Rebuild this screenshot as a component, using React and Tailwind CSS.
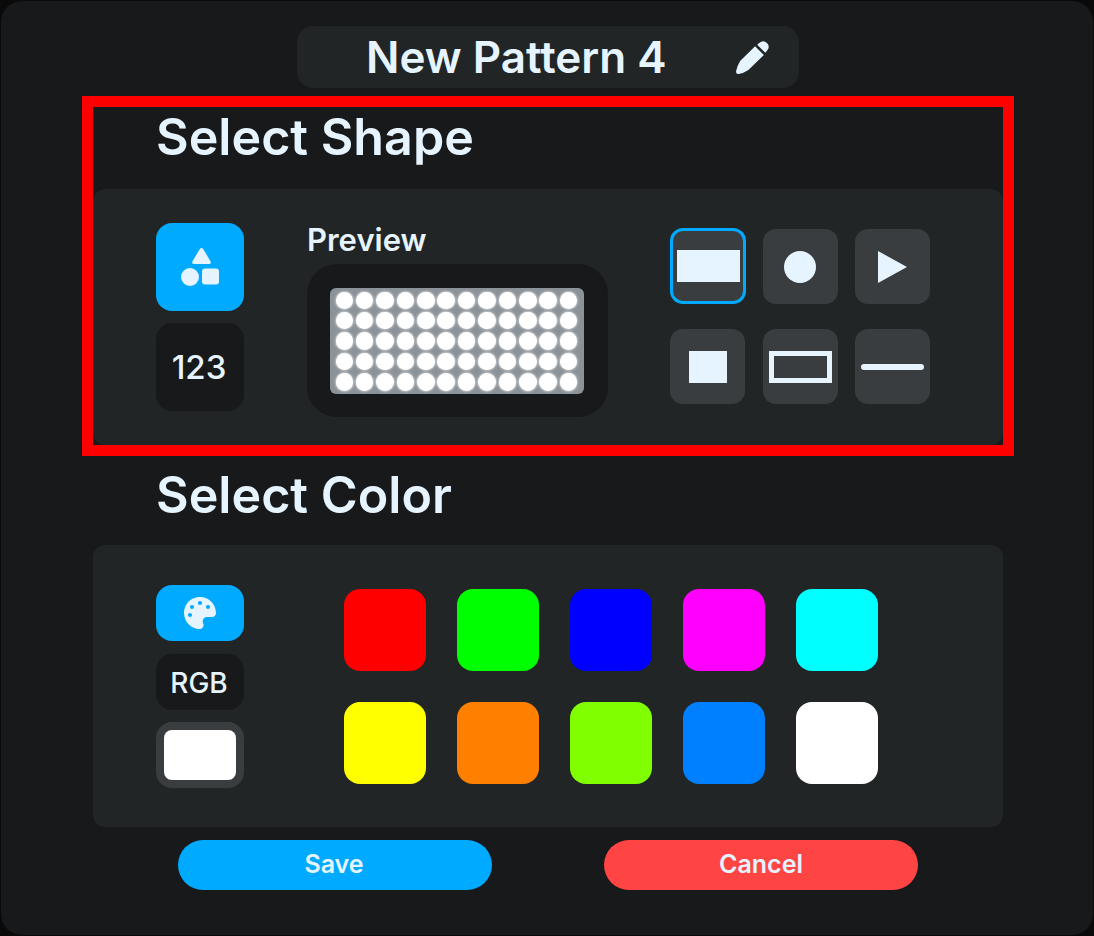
import { FaPalette } from 'react-icons/fa';

const leds = Array.from({ length: 60 });
const colors = ['#ff0000', '#00ff00', '#0000ff', '#ff00ff', '#00ffff', '#ffff00', '#ff8000', '#80ff00', '#0080ff', '#ffffff'];

function ShapeTile({ active, children }) {
  return (
    <div className={active
      ? 'w-[76px] h-[76px] -my-px -mr-px rounded-[13px] bg-[#3a3d40] border-[3px] border-[#00aaff] flex items-center justify-center'
      : 'w-[75px] h-[75px] rounded-[13px] bg-[#3a3d40] flex items-center justify-center'}>
      {children}
    </div>
  );
}

export default function App() {
  return (
    <div className="w-[1094px] h-[936px] bg-[#0a0a0a] font-['Inter',sans-serif] text-[#e6f4ff] relative">
      <div className="w-full h-full rounded-[22px] border border-[#0a0a0a] bg-[#18191b] flex flex-col items-center pt-[25px] pl-[2px]">
        <div className="w-[502px] h-[62px] rounded-2xl bg-[#212526] flex items-center pl-[69px]">
          <span className="text-[44px] font-semibold leading-none w-[370px]">New Pattern 4</span>
          <svg width="33" height="33" viewBox="0 0 32 32" fill="#e6f4ff">
            <path d="M18.5 5 L27 13.5 L12 28 Q7.5 31 2.5 32 Q0 32.3 0 29.5 Q1 24.5 4 19.5 Z" />
            <path d="M20.5 3.6 L22.5 2 Q26.5 -1.5 30 2 Q33.5 5.5 30 9.5 L28.4 11.5 Z" />
          </svg>
        </div>

        <div className="w-[910px] h-[101px] pl-[63px] flex items-center">
          <h2 className="text-[50.2px] font-semibold leading-none -mt-[2px]">Select Shape</h2>
        </div>
        <div className="w-[910px] h-[256px] rounded-xl bg-[#212526] flex pl-[63px] pt-[34px]">
          <div className="flex flex-col gap-3 w-[88px]">
            <div className="w-[88px] h-[88px] rounded-2xl bg-[#00aaff] flex items-center justify-center">
              <svg width="38" height="38" viewBox="0 0 38 38" fill="#e6f4ff">
                <path d="M18.8 1 Q20.5 -0.8 22.2 1 L29.6 13.4 Q30.4 16 27.8 16 L13.2 16 Q10.6 16 11.4 13.4 Z" />
                <circle cx="9" cy="29" r="9" />
                <rect x="21" y="20.5" width="17" height="16" rx="3" />
              </svg>
            </div>
            <div className="w-[88px] h-[88px] rounded-2xl bg-[#18191b] flex items-center justify-center text-[33px] font-medium pt-[1px] pr-[2px]">123</div>
          </div>
          <div className="ml-[63px] w-[301px]">
            <div className="h-[41px] text-[31px] font-semibold leading-none flex items-center -mt-[4px] mb-[4px]">Preview</div>
            <div className="w-[301px] h-[153px] rounded-[30px] bg-[#18191b] flex items-center justify-center pr-[2px]">
              <div className="w-[254px] h-[106px] rounded-md bg-[#8b9298] grid grid-cols-[repeat(12,17.5px)] gap-[2.9px] pl-[6px] pt-[4px] content-start">
                {leds.map((_, i) => (
                  <div key={i} className="w-[17.5px] h-[17.5px] rounded-full bg-white blur-[0.5px] shadow-[0_0_3px_#ffffff]" />
                ))}
              </div>
            </div>
          </div>
          <div className="ml-[62px] mt-[6px] grid grid-cols-[75px_75px_75px] gap-x-[17.5px] gap-y-[25px] content-start">
            <ShapeTile active><div className="w-[63px] h-[32px] shrink-0 bg-[#e6f4ff]" /></ShapeTile>
            <ShapeTile><div className="w-[32px] h-[32px] rounded-full bg-[#e6f4ff]" /></ShapeTile>
            <ShapeTile>
              <svg width="29" height="32" viewBox="0 0 29 32"><polygon points="0,0 29,16 0,32" fill="#e6f4ff" /></svg>
            </ShapeTile>
            <ShapeTile><div className="w-[38px] h-[32px] bg-[#e6f4ff]" /></ShapeTile>
            <ShapeTile><div className="w-[63px] h-[32px] border-[5px] border-[#e6f4ff]" /></ShapeTile>
            <ShapeTile><div className="w-[63px] h-[6px] rounded-sm bg-[#e6f4ff]" /></ShapeTile>
          </div>
        </div>

        <div className="w-[910px] h-[100px] pl-[63px] flex items-center">
          <h2 className="text-[50.2px] font-semibold leading-none">Select Color</h2>
        </div>
        <div className="w-[910px] h-[282px] rounded-xl bg-[#212526] flex pl-[63px] pt-[40px]">
          <div className="flex flex-col w-[88px]">
            <div className="h-[56px] rounded-2xl bg-[#00aaff] flex items-center justify-center">
              <FaPalette size={32} />
            </div>
            <div className="h-[56px] mt-[13px] rounded-2xl bg-[#18191b] flex items-center justify-center text-[28px] font-medium pr-[2px] pt-[1px]">RGB</div>
            <div className="h-[66px] mt-[12px] rounded-2xl bg-[#3a3d40] p-2">
              <div className="w-full h-full rounded-lg bg-white" />
            </div>
          </div>
          <div className="ml-[100px] mt-[4px] grid grid-cols-[82px_82px_82px_82px_82px] gap-[31px] content-start">
            {colors.map(c => (
              <div key={c} className="w-[82px] h-[82px] rounded-2xl" style={{ backgroundColor: c }} />
            ))}
          </div>
        </div>

        <div className="w-[740px] mt-[13px] flex justify-between">
          <button className="w-[314px] h-[50px] rounded-full bg-[#00aaff] text-[25px] font-semibold text-[#e6f4ff] pr-[2px]">Save</button>
          <button className="w-[314px] h-[50px] rounded-full bg-[#ff4444] text-[25px] font-semibold text-[#e6f4ff]">Cancel</button>
        </div>
      </div>

      {/* highlight over the shape section */}
      <div className="absolute left-[82px] top-[96px] w-[932px] h-[360px] border-[11px] border-[#ff0000] pointer-events-none" />
    </div>
  );
}
